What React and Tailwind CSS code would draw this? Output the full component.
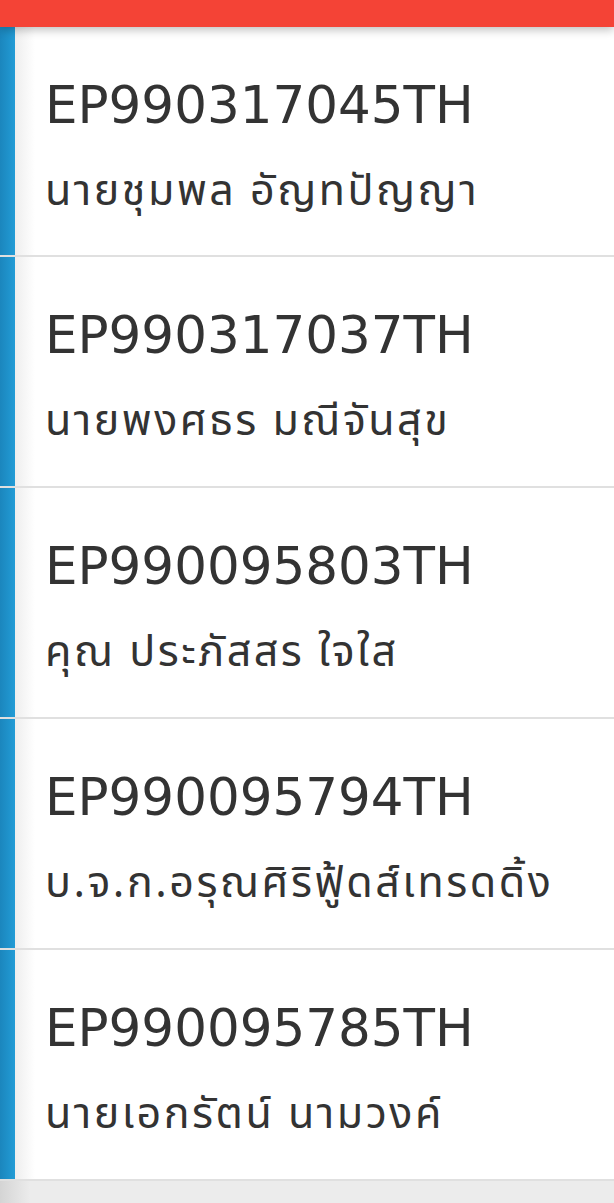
import React from 'react';

const items = [
  { code: 'EP990317045TH', name: 'นายชุมพล อัญทปัญญา' },
  { code: 'EP990317037TH', name: 'นายพงศธร มณีจันสุข' },
  { code: 'EP990095803TH', name: 'คุณ ประภัสสร ใจใส' },
  { code: 'EP990095794TH', name: 'บ.จ.ก.อรุณศิริฟู้ดส์เทรดดิ้ง' },
  { code: 'EP990095785TH', name: 'นายเอกรัตน์ นามวงค์' },
];

export default function App() {
  return (
    <div
      className="w-[614px] h-[1203px] overflow-hidden bg-[#ececec] flex flex-col"
      style={{ fontFamily: '"Noto Sans", "Noto Sans Thai", "Open Sans", sans-serif' }}
    >
      {/* Header bar */}
      <div className="relative z-10 h-[27px] shrink-0 bg-[#f44336] shadow-[0_3px_10px_rgba(0,0,0,0.25)]" />

      {/* List */}
      <div className="flex flex-col">
        {items.map((item, i) => (
          <div
            key={item.code}
            className={`flex border-b-2 border-[#e0e0e0] ${i === 0 ? 'h-[230px]' : 'h-[231px]'}`}
          >
            <div className="w-[15px] shrink-0 bg-gradient-to-r from-[#1b86bd] to-[#229cd6]" />
            <div className="flex-1 bg-[linear-gradient(to_right,#eeeeee,#ffffff_20px)] pl-[30px] pt-[48px]">
              <div className="font-['DejaVu_Sans'] text-[51.5px] leading-[60px] text-[#333333]">{item.code}</div>
              <div className="mt-[28px] text-[43px] leading-[52px] tracking-[2.5px] text-[#333333]">{item.name}</div>
            </div>
          </div>
        ))}
      </div>

      {/* Footer area */}
      <div className="flex-1 bg-[linear-gradient(to_right,#d4d4d4,#ececec_30px)]" />
    </div>
  );
}
